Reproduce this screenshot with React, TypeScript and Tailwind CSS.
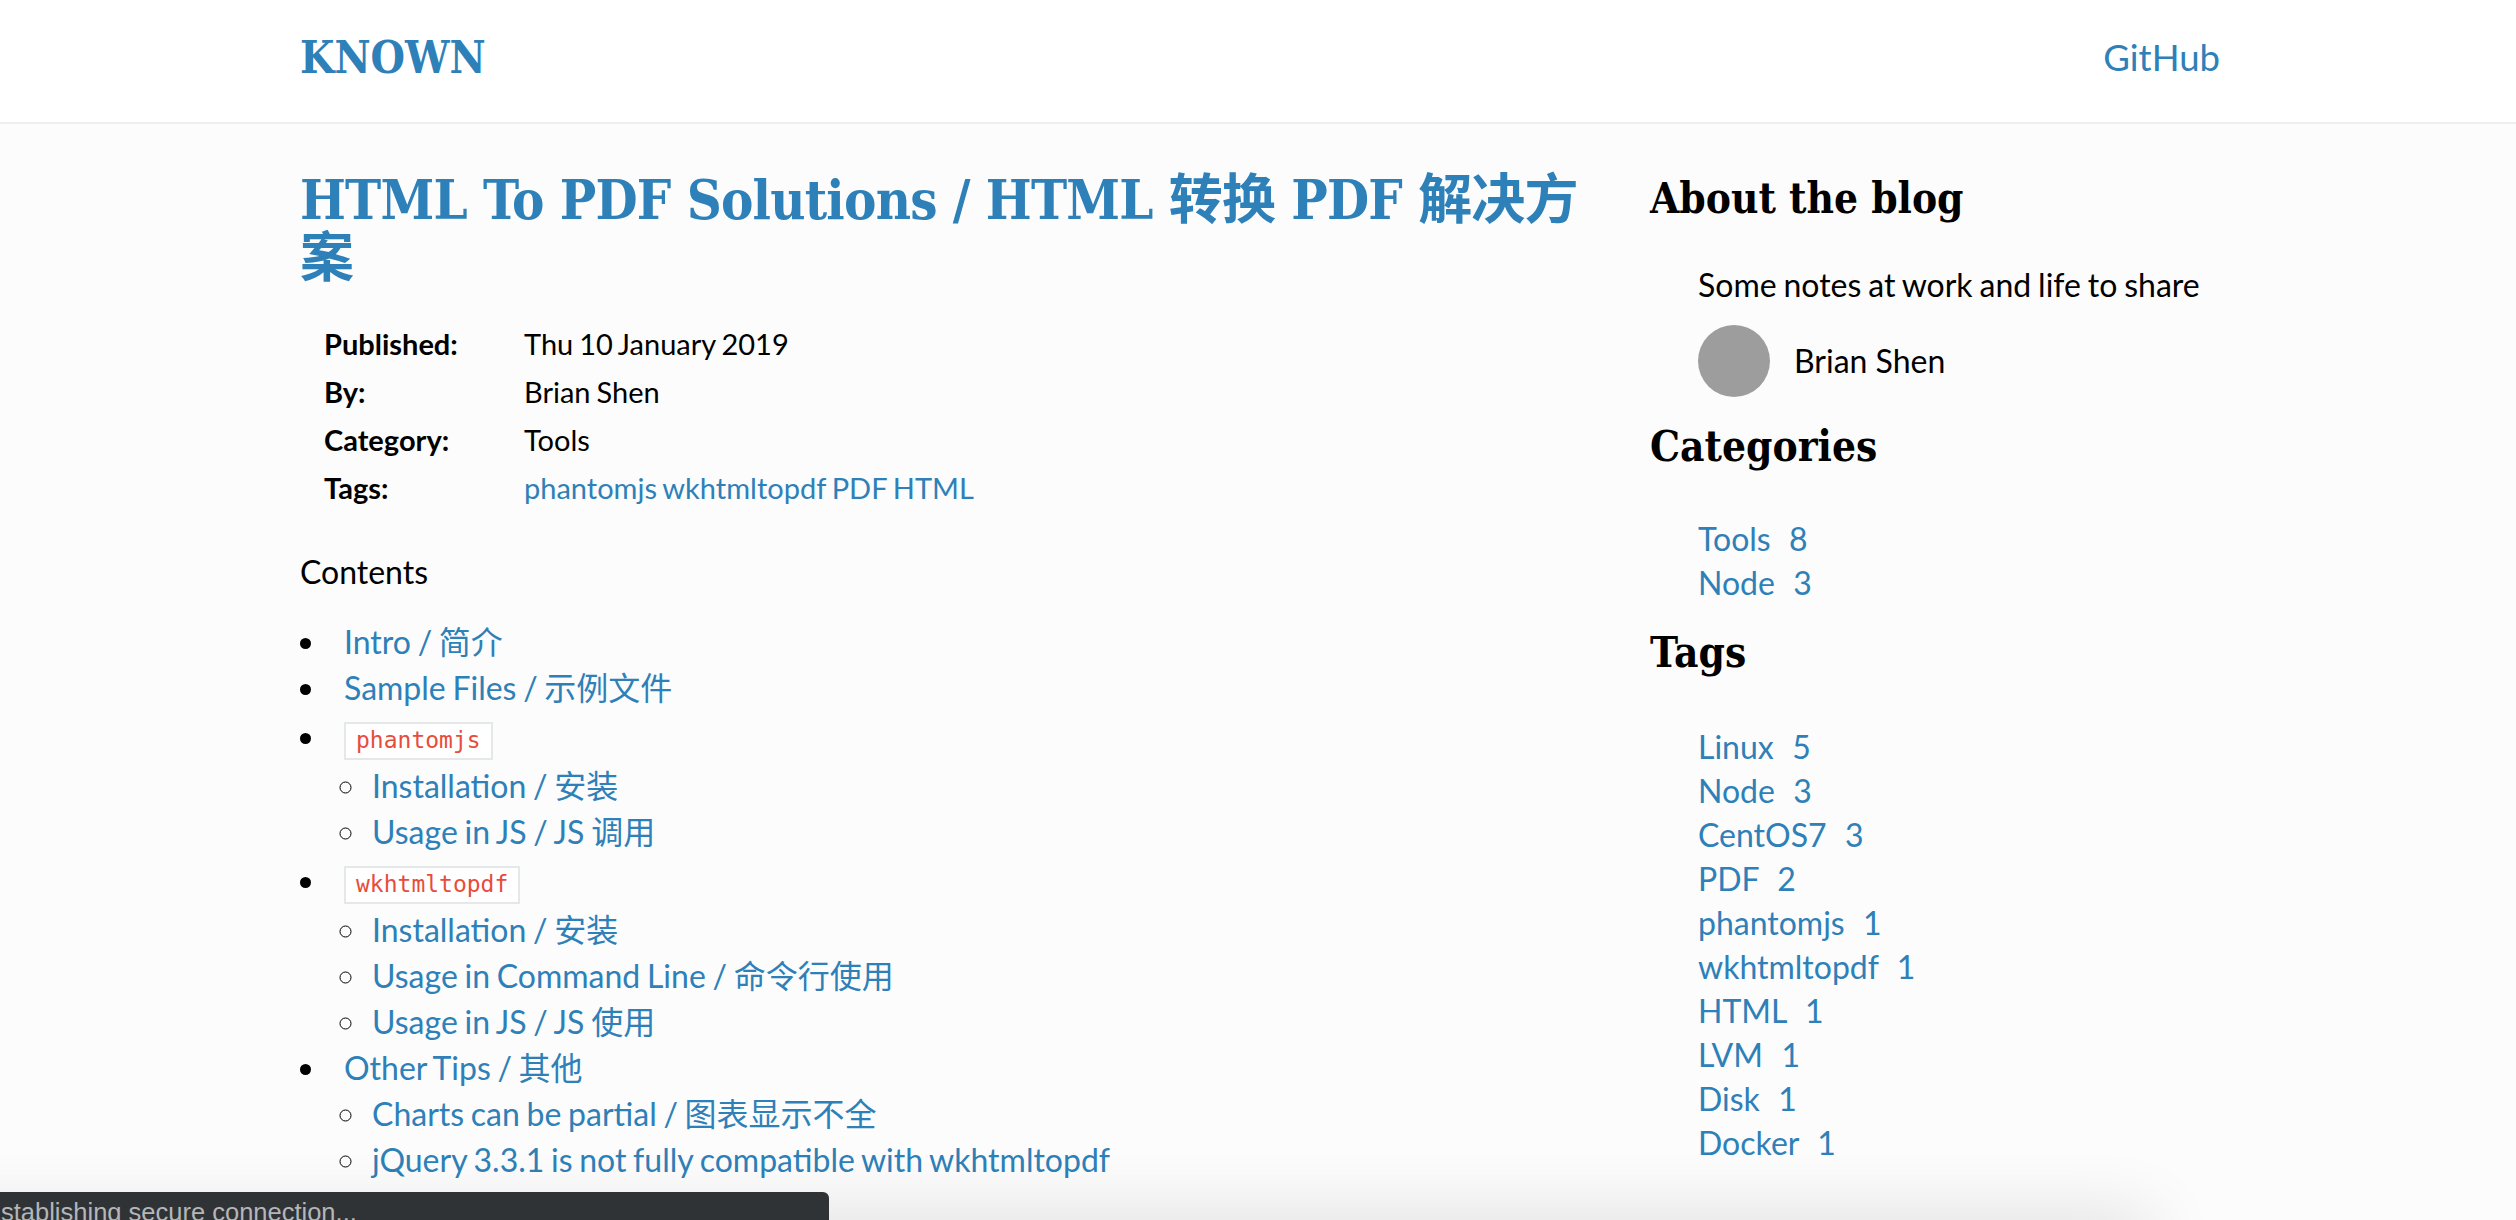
const LINK = 'text-[#2e80b8]';
const SLAB = "font-['DejaVu_Serif_Condensed','DejaVu_Serif','Noto_Sans_CJK_SC',serif]";

const categories = [
  { name: 'Tools', count: 8 },
  { name: 'Node', count: 3 },
];

const tags = [
  { name: 'Linux', count: 5 },
  { name: 'Node', count: 3 },
  { name: 'CentOS7', count: 3 },
  { name: 'PDF', count: 2 },
  { name: 'phantomjs', count: 1 },
  { name: 'wkhtmltopdf', count: 1 },
  { name: 'HTML', count: 1 },
  { name: 'LVM', count: 1 },
  { name: 'Disk', count: 1 },
  { name: 'Docker', count: 1 },
];

const meta = [
  { label: 'Published:', value: 'Thu 10 January 2019' },
  { label: 'By:', value: 'Brian Shen' },
  { label: 'Category:', value: 'Tools' },
];

const Code = ({ children }: { children: string }) => (
  <code className="inline-block border-2 border-[#e4e8e8] bg-white px-[10px] h-[38px] leading-[32px] text-[23px] text-[#e74c3c] font-['DejaVu_Sans_Mono','Liberation_Mono',monospace] align-middle">
    {children}
  </code>
);

const Sub = ({ items }: { items: string[] }) => (
  <ul className="list-[circle] pl-[40px]">
    {items.map((item, i) => (
      <li key={i} className="h-[46px] leading-[46px] pl-[4px]">
        <a className={LINK}>{item}</a>
      </li>
    ))}
  </ul>
);

const Count = ({ name, count }: { name: string; count: number }) => (
  <li className="h-[44px] leading-[44px]">
    <a className={`${LINK} whitespace-pre [word-spacing:1px]`}>{`${name}  ${count}`}</a>
  </li>
);

export default function App() {
  return (
    <div className="relative h-[1220px] overflow-hidden bg-[#fcfcfc] text-black text-[32px] font-['Lato','Noto_Sans_CJK_SC',sans-serif]">
      <header className="h-[124px] bg-white border-b-2 border-[#eeeeee] flex items-center justify-between pl-[300px] pr-[296px] pb-[6px]">
        <a className={`${LINK} text-[44px] font-bold ${SLAB}`}>KNOWN</a>
        <a className={`${LINK} text-[36.5px] mb-[2px]`}>GitHub</a>
      </header>

      <div className="flex pl-[300px] pt-[47px]">
        <main className="w-[1350px] shrink-0">
          <h1 className={`${LINK} w-[1300px] text-[54px] leading-[58px] tracking-[-0.8px] font-bold ${SLAB}`}>
            HTML To PDF Solutions / HTML 转换 PDF 解决方案
          </h1>

          <div className="mt-[33px] pl-[24px] text-[29px] [word-spacing:-1.5px]">
            {meta.map((row) => (
              <div key={row.label} className="flex h-[48px] items-center">
                <span className="w-[200px] font-bold">{row.label}</span>
                <span>{row.value}</span>
              </div>
            ))}
            <div className="flex h-[48px] items-center">
              <span className="w-[200px] font-bold">Tags:</span>
              <a className={LINK}>phantomjs wkhtmltopdf PDF HTML</a>
            </div>
          </div>

          <p className="mt-[36px] h-[48px] leading-[48px]">Contents</p>

          <ul className="list-disc pl-[28px] mt-[23px] [word-spacing:-1.5px]">
            <li className="h-[46px] leading-[46px] pl-[16px]"><a className={LINK}>Intro / 简介</a></li>
            <li className="h-[46px] leading-[46px] pl-[16px]"><a className={LINK}>Sample Files / 示例文件</a></li>
            <li className="h-[52px] leading-[52px] pl-[16px]"><Code>phantomjs</Code></li>
            <Sub items={['Installation / 安装', 'Usage in JS / JS 调用']} />
            <li className="h-[52px] leading-[52px] pl-[16px]"><Code>wkhtmltopdf</Code></li>
            <Sub items={['Installation / 安装', 'Usage in Command Line / 命令行使用', 'Usage in JS / JS 使用']} />
            <li className="h-[46px] leading-[46px] pl-[16px]"><a className={LINK}>Other Tips / 其他</a></li>
            <Sub items={['Charts can be partial / 图表显示不全', 'jQuery 3.3.1 is not fully compatible with wkhtmltopdf']} />
          </ul>
        </main>

        <aside className="w-[560px]">
          <h2 className={`text-[42px] leading-[56px] font-bold ${SLAB}`}>About the blog</h2>
          <div className="pl-[48px] mt-[36px]">
            <p className="h-[44px] leading-[44px] [word-spacing:-1.3px]">Some notes at work and life to share</p>
            <div className="flex items-center gap-[24px] mt-[18px]">
              <div className="w-[72px] h-[72px] rounded-full bg-[#9d9d9d]" />
              <span>Brian Shen</span>
            </div>
          </div>
          <h2 className={`mt-[20px] text-[42px] leading-[60px] font-bold ${SLAB}`}>Categories</h2>
          <ul className="pl-[48px] mt-[40px]">
            {categories.map((c) => <Count key={c.name} {...c} />)}
          </ul>
          <h2 className={`mt-[18px] text-[42px] leading-[60px] font-bold ${SLAB}`}>Tags</h2>
          <ul className="pl-[48px] mt-[42px]">
            {tags.map((t) => <Count key={t.name} {...t} />)}
          </ul>
        </aside>
      </div>

      {/* browser status bubble and the shadow along the window bottom */}
      <div className="absolute bottom-[-40px] left-[-100px] w-[2250px] h-[40px] bg-[#dddddd] shadow-[0_0_70px_rgba(0,0,0,0.16)]" />
      <div className="absolute bottom-0 left-0 w-[829px] h-[28px] bg-[#303336] rounded-tr-[6px] overflow-hidden">
        <span className="absolute left-[-16px] top-[5px] whitespace-nowrap text-[25.5px] leading-[30px] text-[#b4b6b8] font-['Liberation_Sans',sans-serif]">
          Establishing secure connection...
        </span>
      </div>
    </div>
  );
}
